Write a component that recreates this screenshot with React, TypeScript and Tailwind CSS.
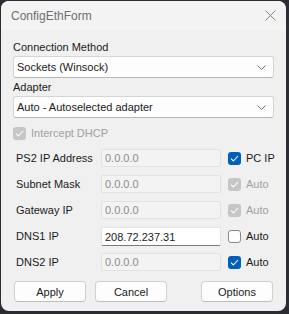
import React from "react";

const font = { fontFamily: '"Liberation Sans", Arial, sans-serif' };

function Check({ state }: { state: "on" | "off" | "dim" }) {
  if (state === "off") {
    return <div className="w-[13px] h-[13px] shrink-0 rounded-[3px] border border-[#8a8a8a] bg-white" />;
  }
  const bg = state === "on" ? "bg-[#005fb8]" : "bg-[#c6c6c6]";
  return (
    <div className={`w-[13px] h-[13px] shrink-0 rounded-[3px] ${bg} flex items-center justify-center`}>
      <svg width="9" height="7" viewBox="0 0 9 7" fill="none">
        <path d="M1 3.6 L3.4 6 L8 1" stroke="white" strokeWidth="1.1" />
      </svg>
    </div>
  );
}

function Combo({ value }: { value: string }) {
  return (
    <div className="h-[22px] flex items-center justify-between rounded-[3px] border border-[#d5d5d5] border-b-[#b8b8b8] bg-[#fdfdfd] pl-[3px] pr-[7px] text-[#1b1b1b]">
      <span>{value}</span>
      <svg width="9" height="5" viewBox="0 0 9 5" fill="none">
        <path d="M0.5 0.5 L4.5 4.5 L8.5 0.5" stroke="#5f5f5f" strokeWidth="0.9" />
      </svg>
    </div>
  );
}

function IpRow({
  label,
  value,
  enabled,
  check,
  checkLabel,
}: {
  label: string;
  value: string;
  enabled?: boolean;
  check: "on" | "off" | "dim";
  checkLabel: string;
}) {
  return (
    <div className="h-[26px] flex items-start whitespace-nowrap">
      <div className="w-[88px] shrink-0 pl-[3px] h-[18px] flex items-center text-[#1b1b1b]">{label}</div>
      <div
        className={
          enabled
            ? "w-[120px] shrink-0 h-[19px] flex items-center pl-[3px] bg-white border border-[#e3e3e3] border-b-[#7a7a7a] rounded-[2px] text-[#1b1b1b]"
            : "w-[120px] shrink-0 h-[18px] flex items-center pl-[3px] bg-[#f3f3f3] border border-[#e2e2e2] rounded-[2px] text-[#8c8c8c]"
        }
      >
        {value}
      </div>
      <div className="ml-[7px] h-[18px] flex items-center gap-[5px]">
        <Check state={check} />
        <span className={check === "dim" ? "text-[#a0a0a0]" : "text-[#1b1b1b]"}>{checkLabel}</span>
      </div>
    </div>
  );
}

function Btn({ label }: { label: string }) {
  return (
    <div className="w-[72px] h-[21px] flex items-center justify-center rounded-[4px] border border-[#d0d0d0] border-b-[#bdbdbd] bg-[#fdfdfd] text-[#1b1b1b]">
      {label}
    </div>
  );
}

export default function App() {
  return (
    <div className="w-[289px] h-[314px] bg-[#2a2d33] pl-[1px] pt-[1px]" style={font}>
      <div className="w-[285px] h-[310px] rounded-[8px] bg-[#f0f0f0] text-[11px] leading-[16px] overflow-hidden">
        {/* Title bar */}
        <div className="h-[29px] flex items-center justify-between pl-[10px] pr-[10px] bg-[#f3f3f3]">
          <span className="text-[12px] text-[#6f6f6f]">ConfigEthForm</span>
          <svg width="11" height="11" viewBox="0 0 11 11" fill="none">
            <path d="M0.5 0.5 L10.5 10.5 M10.5 0.5 L0.5 10.5" stroke="#7a7a7a" strokeWidth="0.9" />
          </svg>
        </div>

        <div className="px-[12px] pt-[9px] flex flex-col">
          <div className="h-[16px] text-[#1b1b1b]">Connection Method</div>
          <div className="mt-[1px]">
            <Combo value="Sockets (Winsock)" />
          </div>
          <div className="mt-[1px] h-[17px] text-[#1b1b1b]">Adapter</div>
          <div>
            <Combo value="Auto - Autoselected adapter" />
          </div>
          <div className="mt-[7px] h-[16px] flex items-center gap-[5px]">
            <Check state="dim" />
            <span className="text-[#a0a0a0]">Intercept DHCP</span>
          </div>

          <div className="mt-[8px] flex flex-col">
            <IpRow label="PS2 IP Address" value="0.0.0.0" check="on" checkLabel="PC IP" />
            <IpRow label="Subnet Mask" value="0.0.0.0" check="dim" checkLabel="Auto" />
            <IpRow label="Gateway IP" value="0.0.0.0" check="dim" checkLabel="Auto" />
            <IpRow label="DNS1 IP" value="208.72.237.31" enabled check="off" checkLabel="Auto" />
            <IpRow label="DNS2 IP" value="0.0.0.0" check="on" checkLabel="Auto" />
          </div>

          <div className="mt-[2px] flex pl-[1px] pr-[1px]">
            <Btn label="Apply" />
            <div className="ml-[9px]">
              <Btn label="Cancel" />
            </div>
            <div className="ml-auto">
              <Btn label="Options" />
            </div>
          </div>
        </div>
      </div>
    </div>
  );
}
